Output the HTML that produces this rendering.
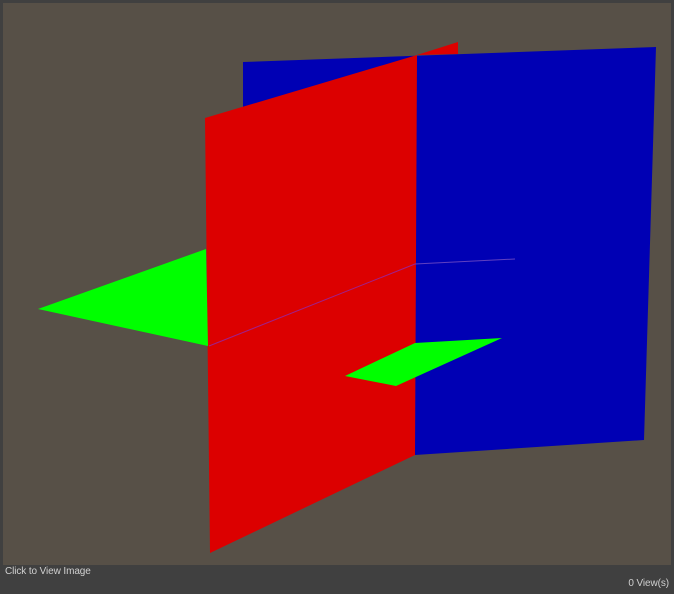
<!DOCTYPE html>
<html><head><meta charset="utf-8"><style>
html,body{margin:0;padding:0;background:#404040;width:674px;height:594px;overflow:hidden;font-family:"Liberation Sans",sans-serif}
svg{position:absolute;left:0;top:0}
.t1{position:absolute;left:5px;top:566px;font-size:10px;color:#d0d0d0;letter-spacing:-0.1px}
.t2{position:absolute;right:5px;top:578px;font-size:10px;color:#d0d0d0;letter-spacing:-0.1px}
</style></head><body>
<svg width="674" height="594" viewBox="0 0 674 594">
<rect x="3" y="3" width="668" height="562" fill="#575047"/>
<polygon points="243,62 656,47 644,440 415,455 243,300" fill="#0000b4"/>
<polygon points="417,55 458,42 458,54" fill="#dc0000"/>
<polygon points="205,118 417,55 415,455 210,553" fill="#dc0000"/>
<polygon points="38,309 206,249 208,346" fill="#00ff00"/>
<polygon points="345,376 415,343 502,338 396,386" fill="#00ff00"/>
<line x1="209" y1="346" x2="415" y2="264" stroke="#a0208c" stroke-width="1"/>
<line x1="415" y1="264" x2="515" y2="259" stroke="#6040c0" stroke-width="1"/>
</svg>
<div class="t1">Click to View Image</div>
<div class="t2">0 View(s)</div>
</body></html>
